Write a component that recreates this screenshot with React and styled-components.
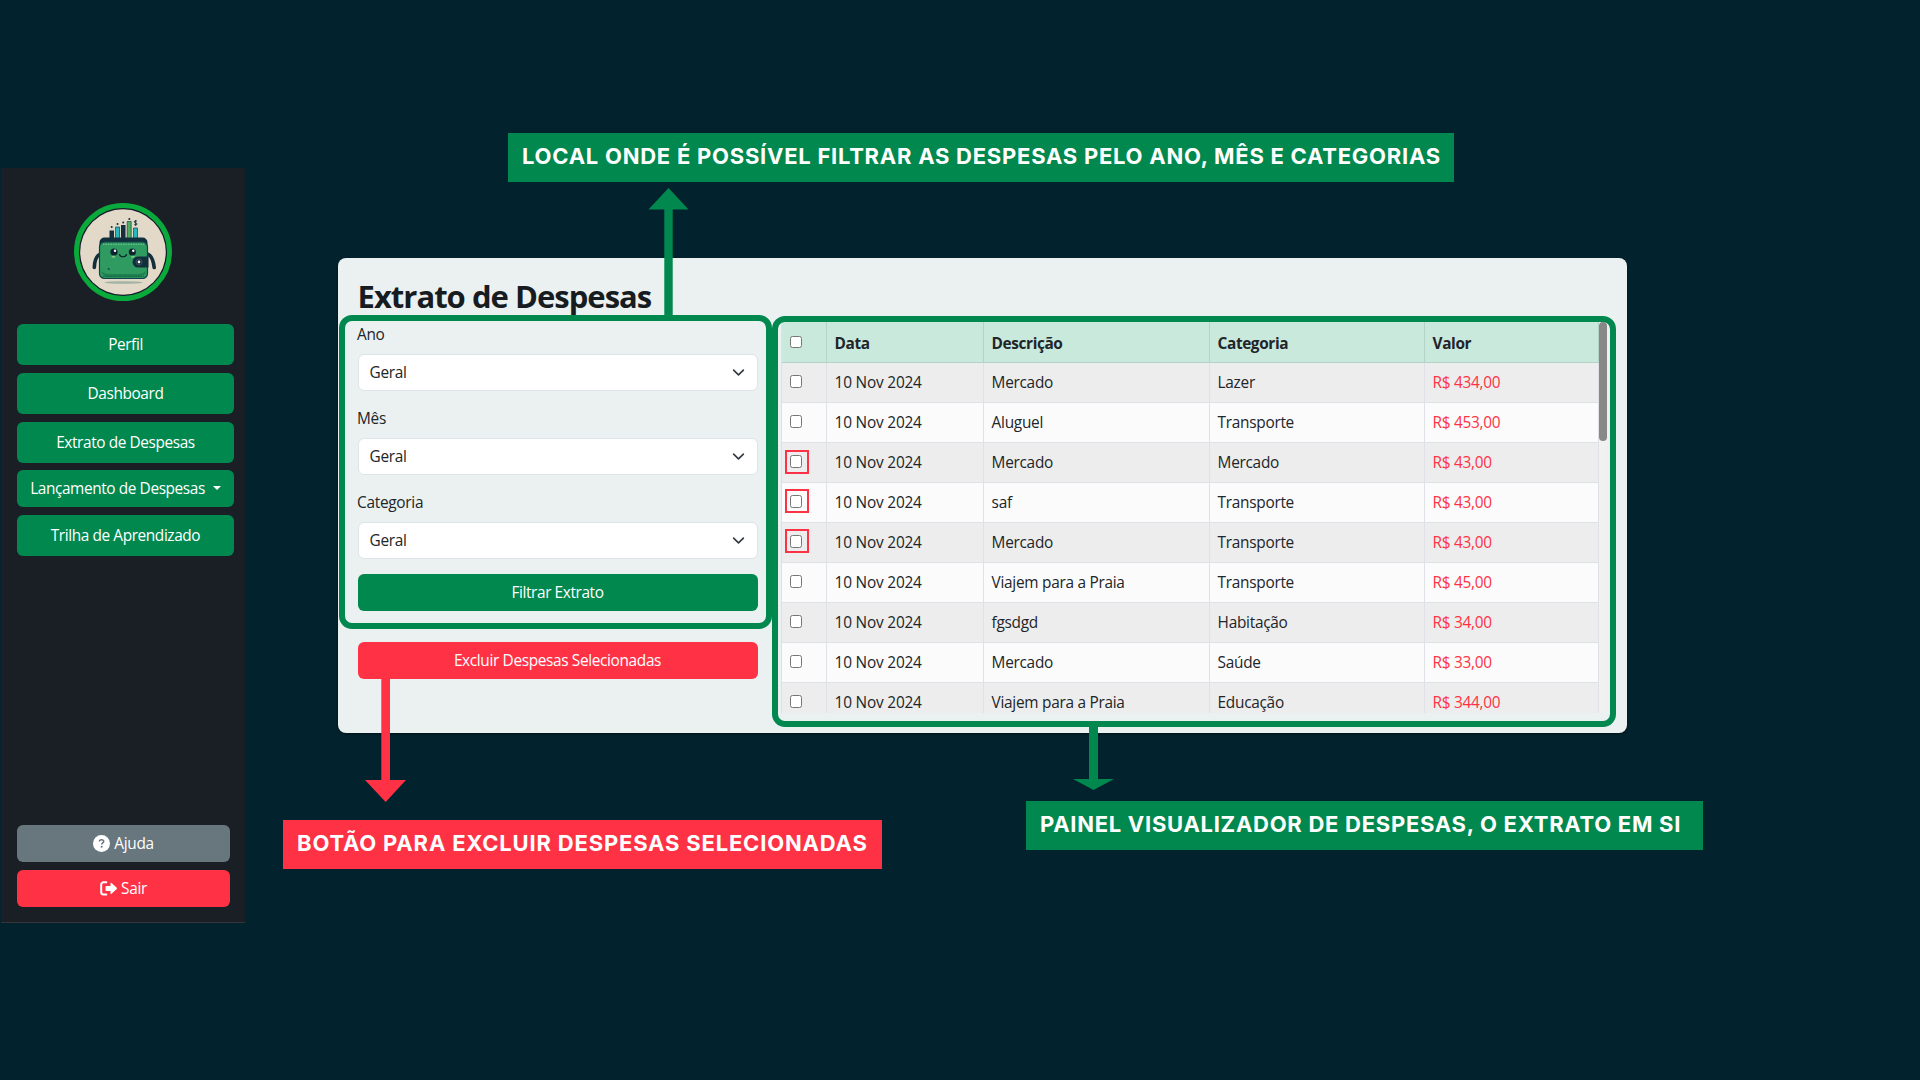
import React from 'react';
import styled, { createGlobalStyle } from 'styled-components';

const GREEN = '#01884f';
const RED = '#ff3245';

const GlobalStyle = createGlobalStyle`
  *, *::before, *::after { box-sizing: border-box; }
  body {
    margin: 0;
    background: #02232e;
    color: #212529;
    font-family: 'Open Sans', 'Noto Sans', sans-serif;
    font-size: 15.4px;
    line-height: 24px;
    overflow: hidden;
  }
`;

const Page = styled.div`
  position: relative;
  display: flex;
  align-items: flex-start;
  width: 1920px;
  height: 1080px;
  overflow: hidden;
`;

const Text = styled.span`
  letter-spacing: ${(p) => p.$track ?? -0.28}px;
  white-space: nowrap;
`;

const Sidebar = styled.aside`
  display: flex;
  flex-direction: column;
  width: 244px;
  height: 755px;
  margin: 168px 0 0 1px;
  padding: 35px 11px 15px 16px;
  background: #1a1f25;
  border-bottom: 1px solid #34343a;
`;

const Avatar = styled.div`
  display: flex;
  width: 98px;
  height: 98px;
  margin: 0 0 23px 57px;
  svg { width: 98px; height: 98px; }
`;

const Nav = styled.nav`
  display: flex;
  flex-direction: column;
  gap: 7.75px;
`;

const Footer = styled(Nav)`
  margin-top: auto;
  width: 213px;
`;

const Button = styled.button`
  display: flex;
  align-items: center;
  justify-content: center;
  gap: ${(p) => p.$gap ?? 4}px;
  width: 100%;
  height: ${(p) => p.$h ?? 37}px;
  margin-top: ${(p) => p.$mt ?? 0}px;
  padding: 1px 0 0;
  border: 0;
  border-radius: 6px;
  background: ${(p) => p.$bg ?? GREEN};
  color: #fff;
  font: inherit;
  svg { margin-bottom: 1px; }
`;

const Caret = styled.span`
  border: 4.5px solid transparent;
  border-top-color: #fff;
  border-bottom: 0;
  margin-bottom: 3px;
`;

const Card = styled.main`
  display: flex;
  flex-direction: column;
  width: 1289.5px;
  height: 475px;
  margin: 258px 0 0 92.5px;
  padding: 16px 20px;
  border-radius: 8px;
  background: #ebf1f1;
  box-shadow: 0 1px 3px rgba(0, 0, 0, 0.5);
`;

const Title = styled.h1`
  margin: 0;
  height: 48px;
  color: #171c21;
  font-size: 31px;
  font-weight: 700;
  line-height: 45px;
`;

const Columns = styled.div`
  display: flex;
  align-items: flex-start;
`;

const Form = styled.form`
  display: flex;
  flex-direction: column;
  width: 400px;
`;

const Field = styled.label`
  display: flex;
  flex-direction: column;
  gap: 6.5px;
  height: 84px;
  padding-top: 1px;
  text-indent: -0.5px;
`;

const Select = styled.div`
  display: flex;
  align-items: center;
  justify-content: space-between;
  height: 37px;
  padding: 1px 12px 0 11.5px;
  border: 1px solid #dee4e8;
  border-radius: 6px;
  background: #fff;
  svg { width: 13px; height: 13px; }
`;

const TableBox = styled.div`
  display: flex;
  width: 826px;
  height: 391px;
  margin-left: 23.5px;
  overflow: hidden;
`;

const Table = styled.div`
  flex: none;
  width: 817.5px;
  border-left: 1px solid #dee2e6;
`;

const Row = styled.div`
  display: grid;
  grid-template-columns: 45px 157px 226px 215px 1fr;
  height: ${(p) => (p.$head ? 41 : 40)}px;
  background: ${(p) => (p.$head ? '#c9e9dd' : p.$odd ? '#ededed' : '#fbfbfb')};
  font-weight: ${(p) => (p.$head ? 700 : 400)};
`;

const Cell = styled.div`
  display: flex;
  align-items: center;
  padding: ${(p) => (p.$head ? 3 : 1)}px 0 0 7.6px;
  border: solid ${(p) => (p.$head ? '#b4d3c8' : '#dee2e6')};
  border-width: 0 1px 1px 0;
  color: ${(p) => (p.$red ? RED : 'inherit')};
`;

const Check = styled.input`
  appearance: none;
  width: 12.5px;
  height: 12.5px;
  margin: 0 0 3px 0.4px;
  border: 1px solid #767676;
  border-radius: 2.5px;
  background: #fff;
`;

const Track = styled.div`
  flex: 1;
  background: #f1f1f1;
`;

const Thumb = styled.div`
  width: 8px;
  height: 119px;
  border-radius: 4px;
  background: #888;
`;

const Frame = styled.div`
  position: absolute;
  left: ${(p) => p.$x}px;
  top: ${(p) => p.$y}px;
  width: ${(p) => p.$w}px;
  height: ${(p) => p.$h}px;
  border: ${(p) => p.$b ?? 6}px solid ${(p) => p.$c ?? GREEN};
  border-radius: ${(p) => p.$r ?? 13}px;
`;

const Callout = styled.div`
  position: absolute;
  left: ${(p) => p.$x}px;
  top: ${(p) => p.$y}px;
  width: ${(p) => p.$w}px;
  height: 49px;
  padding: 0 0 3px 14px;
  background: ${(p) => p.$c ?? GREEN};
  color: #fff;
  font: 700 22px/46px Inter, sans-serif;
`;

const Arrows = styled.svg`
  position: absolute;
  inset: 0;
`;

const Chevron = () => (
  <svg viewBox="0 0 16 16" fill="none" stroke="#343a40" strokeWidth="2" strokeLinecap="round" strokeLinejoin="round">
    <path d="m2 5 6 6 6-6" />
  </svg>
);

const Mascot = () => (
  <svg viewBox="0 0 98 98">
    <circle cx="49" cy="49" r="46.5" fill="#15192a" stroke="#09a93b" strokeWidth="5" />
    <circle cx="49" cy="49" r="42.8" fill="#e3d9c8" />
    <ellipse cx="49.500" cy="79.500" rx="19" ry="1.300" fill="#a3b3a3" />
    <path d="M35.500 27.500h4.500v9h-4.500zM47 22h4.500v14H47z" fill="#15303c" />
    <path d="M41.500 24h4v12h-4zM59.500 25h4v11h-4z" fill="#2bb5bd" stroke="#15404a" strokeWidth=".7" />
    <path d="M53.200 18.500h4V36h-4z" fill="#4fae62" stroke="#15404a" strokeWidth=".7" />
    <g fill="#15303c">
      <circle cx="37.700" cy="24" r="1" /><circle cx="43.500" cy="21" r="1" />
      <circle cx="49.200" cy="19.500" r="1" /><circle cx="55.300" cy="16" r="1" />
    </g>
    <path d="M63 18.300c-.6-.8-2.800-.8-2.800.5 0 1.500 2.900.7 2.900 2.200 0 1.300-2.400 1.300-3 .3M61.600 17v5.800" fill="none" stroke="#15303c" strokeWidth=".9" />
    <path d="M25.500 51.500c-3.500 2-5 7-5.200 13M74.500 51.500c3.500 2 5 7 5.700 13" fill="none" stroke="#12303c" strokeWidth="3.600" strokeLinecap="round" />
    <rect x="25.500" y="34.500" width="48" height="22" rx="5" fill="#12303c" />
    <rect x="25.500" y="39" width="48" height="36.500" rx="5" fill="#2f9b60" stroke="#12404a" strokeWidth="1.200" />
    <path d="M27 68q2 6 7 6h31q6 0 7-6-3 3-8 3H35q-5 0-8-3z" fill="#1e7f50" />
    <path d="M29 41.300h41" stroke="#8ed2a4" strokeWidth=".8" strokeDasharray="1.500 1" />
    <path d="M29 73.700h41" stroke="#12503f" strokeWidth=".7" strokeDasharray="1.500 1" />
    <circle cx="40" cy="49" r="3.600" fill="#0e2430" /><circle cx="58.300" cy="49" r="3.600" fill="#0e2430" />
    <circle cx="41" cy="47.800" r="1.200" fill="#fff" /><circle cx="59.300" cy="47.800" r="1.200" fill="#fff" />
    <ellipse cx="39.500" cy="53.700" rx="2" ry="1" fill="#83c87f" /><ellipse cx="59" cy="53.700" rx="2" ry="1" fill="#83c87f" />
    <path d="M45.500 51.500c1 3 6 3 7 0" fill="none" stroke="#0e2430" strokeWidth="1.200" strokeLinecap="round" />
    <path d="m34 65 1.500 2" stroke="#12404a" strokeWidth="1.200" />
    <path d="M74.500 53.500H64a5.500 5.500 0 0 0 0 11h10.500z" fill="#12303c" />
    <circle cx="65" cy="59" r="2.900" fill="#0a1c28" stroke="#4b6b75" strokeWidth=".7" /><circle cx="65" cy="59" r="1.400" fill="#fff" />
  </svg>
);

const HelpIcon = () => (
  <svg width="17" height="17" viewBox="0 0 16 16">
    <circle cx="8" cy="8" r="8" fill="#fff" />
    <path d="M6 6.200c0-1.200.9-1.700 2-1.700s2.100.6 2.100 1.700c0 1.300-1.900 1.300-1.900 2.700" fill="none" stroke="#68767e" strokeWidth="1.400" />
    <circle cx="8.150" cy="11" r=".95" fill="#68767e" />
  </svg>
);

const ExitIcon = () => (
  <svg width="17" height="15" viewBox="0 0 17 15">
    <path d="M6.300 1.300H3.500A2.300 2.300 0 0 0 1.200 3.600v7.600a2.300 2.300 0 0 0 2.300 2.300h2.800" fill="none" stroke="#fff" strokeWidth="2" strokeLinecap="round" />
    <path d="M5.500 5.900q0-.9.900-.9h4.100V2.600q0-1.300 1-.5l5 4.500q.8.800 0 1.600l-5 4.500q-1 .8-1-.5V10H6.400q-.9 0-.9-.9z" fill="#fff" />
  </svg>
);

const rows = [
  ['Mercado', 'Lazer', '434,00'],
  ['Aluguel', 'Transporte', '453,00'],
  ['Mercado', 'Mercado', '43,00'],
  ['saf', 'Transporte', '43,00'],
  ['Mercado', 'Transporte', '43,00'],
  ['Viajem para a Praia', 'Transporte', '45,00'],
  ['fgsdgd', 'Habitação', '34,00'],
  ['Mercado', 'Saúde', '33,00'],
  ['Viajem para a Praia', 'Educação', '344,00'],
];

export default function App() {
  return (
    <Page>
      <GlobalStyle />
      <Sidebar>
        <Avatar><Mascot /></Avatar>
        <Nav>
          <Button $h={41}><Text $track={-0.4}>Perfil</Text></Button>
          <Button $h={41}><Text $track={-0.4}>Dashboard</Text></Button>
          <Button $h={41}><Text $track={-0.4}>Extrato de Despesas</Text></Button>
          <Button $gap={8}><Text $track={-0.4}>Lançamento de Despesas</Text><Caret /></Button>
          <Button $h={41}><Text $track={-0.4}>Trilha de Aprendizado</Text></Button>
        </Nav>
        <Footer>
          <Button $bg="#68767e"><HelpIcon /><Text>Ajuda</Text></Button>
          <Button $bg={RED}><ExitIcon /><Text>Sair</Text></Button>
        </Footer>
      </Sidebar>
      <Card>
        <Title><Text $track={-0.98}>Extrato de Despesas</Text></Title>
        <Columns>
          <Form>
            {['Ano', 'Mês', 'Categoria'].map((name) => (
              <Field key={name}>
                <Text>{name}</Text>
                <Select><Text>Geral</Text><Chevron /></Select>
              </Field>
            ))}
            <Button type="button"><Text $track={-0.4}>Filtrar Extrato</Text></Button>
            <Button type="button" $bg={RED} $mt={31}><Text $track={-0.35}>Excluir Despesas Selecionadas</Text></Button>
          </Form>
          <TableBox>
            <Table>
              <Row $head>
                <Cell $head><Check type="checkbox" /></Cell>
                {['Data', 'Descrição', 'Categoria', 'Valor'].map((h) => (
                  <Cell $head key={h}><Text $track={-0.4}>{h}</Text></Cell>
                ))}
              </Row>
              {rows.map(([desc, cat, value], i) => (
                <Row key={i} $odd={i % 2 === 0}>
                  <Cell><Check type="checkbox" /></Cell>
                  <Cell><Text $track={-0.2}>10 Nov 2024</Text></Cell>
                  <Cell><Text>{desc}</Text></Cell>
                  <Cell><Text>{cat}</Text></Cell>
                  <Cell $red><Text>R$ {value}</Text></Cell>
                </Row>
              ))}
            </Table>
            <Track><Thumb /></Track>
          </TableBox>
        </Columns>
      </Card>

      <Frame $x={339} $y={315} $w={433} $h={314} />
      <Frame $x={772} $y={316} $w={844} $h={411} />
      {[450, 489, 529].map((y) => (
        <Frame key={y} $x={785} $y={y} $w={24} $h={24} $b={2} $r={0} $c={RED} />
      ))}
      <Arrows width="1920" height="1080">
        <path d="M664.300 316V209.500H648.500L668.500 188l20 21.500h-15.800V316z" fill={GREEN} />
        <path d="M1089 726v53h-16l20.500 11 20.500-11h-16v-53z" fill={GREEN} />
        <path d="M381.300 678v102H365l20.700 22 20.300-22h-16V678z" fill={RED} />
      </Arrows>
      <Callout $x={508} $y={133} $w={946}><Text $track={0.75}>LOCAL ONDE É POSSÍVEL FILTRAR AS DESPESAS PELO ANO, MÊS E CATEGORIAS</Text></Callout>
      <Callout $x={1026} $y={801} $w={677}><Text $track={0.72}>PAINEL VISUALIZADOR DE DESPESAS, O EXTRATO EM SI</Text></Callout>
      <Callout $x={283} $y={820} $w={599} $c={RED}><Text $track={0.82}>BOTÃO PARA EXCLUIR DESPESAS SELECIONADAS</Text></Callout>
    </Page>
  );
}
